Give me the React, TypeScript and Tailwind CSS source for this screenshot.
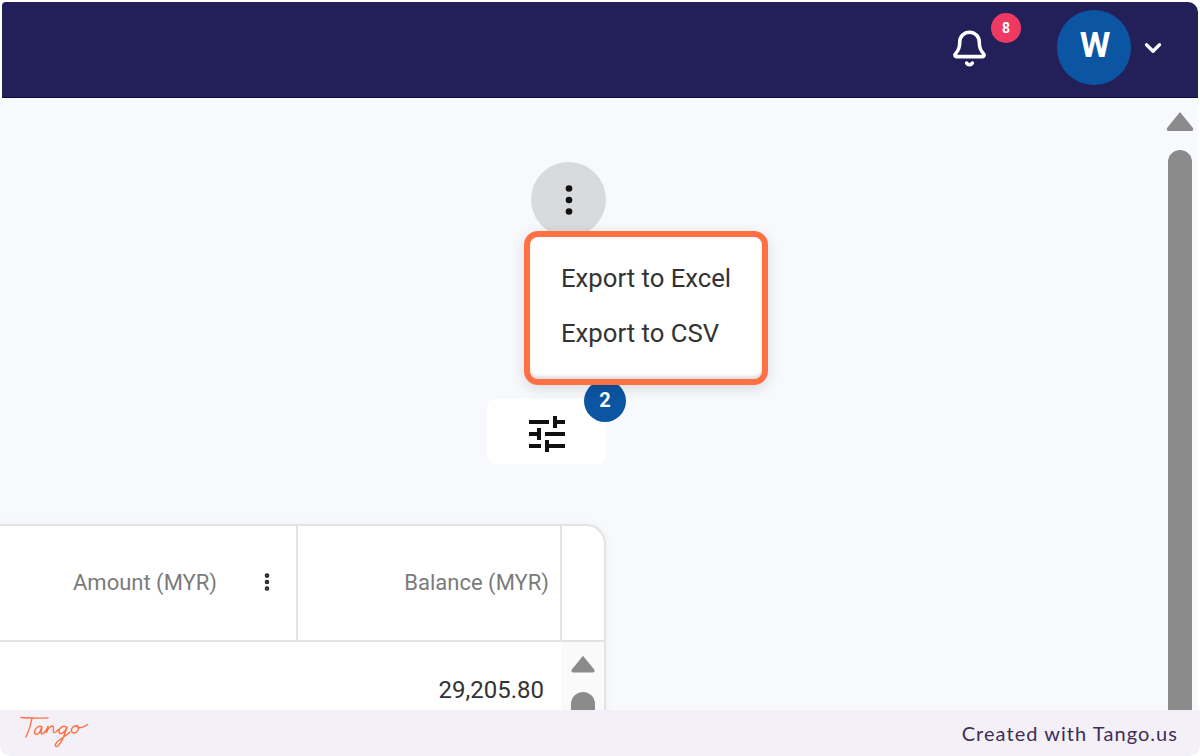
import { ChevronDown, Bell, EllipsisVertical } from "lucide-react";
import { MdTune } from "react-icons/md";

const ThreeDots = () => (
  <svg width="8" height="32" viewBox="0 0 8 32" fill="#111">
    <circle cx="4" cy="4.500" r="3.300" />
    <circle cx="4" cy="16" r="3.300" />
    <circle cx="4" cy="27.500" r="3.300" />
  </svg>
);

const TriangleUp = () => (
  <svg width="28" height="22" viewBox="0 0 28 22" fill="#8b8b8b">
    <path d="M14 1 L27 17 Q28 20 25 20 H3 Q0 20 1 17 Z" />
  </svg>
);

const TangoLogo = () => (
  <svg width="70" height="36" viewBox="0 0 70 36" fill="none" stroke="#ff7043" strokeWidth="1.400" strokeLinecap="round" strokeLinejoin="round">
    <path d="M1 2.500c8 .6 18 .8 27 .4" />
    <path d="M12 3c-1 6-3 13-6 19" />
    <path d="M22 12c-3-2-7 1-7.500 5-.4 3 3 3 5 .5l2.500-5.500-1 6c.5 2 3 .5 5-2.500l2-4-1.500 6c1-3 3.500-6.500 6-6.500 1.500 0 .5 4 1 6 .5 1.500 3 0 5-2.500" />
    <path d="M46 12c-3-2-7 1-7 4.500 0 3 3.500 2.500 6-.5l2-4c-2 7-5 15-9 19-2.500 2-4-1-1-4 4-3.500 9-6 13-10" />
    <path d="M58 11c-4-1-7 2-6.500 5 .5 3 5 2.500 6.500-.5 1-2.500 0-4.500-1.500-4.500 2 2.500 6 2 11-1.500" />
  </svg>
);

const Scrollbar = () => (
  <div className="w-[38px] flex flex-col items-center pt-[13px] pl-[2px] pr-[1px]">
    <TriangleUp />
    <div className="mt-[17px] w-[24px] flex-1 rounded-t-full bg-[#8b8b8b]" />
  </div>
);

export default function App() {
  return (
    <div
      className="relative h-[756px] w-[1200px] overflow-hidden bg-white flex flex-col"
      style={{ fontFamily: "Roboto, sans-serif" }}
    >
      {/* screenshot area */}
      <div className="flex-1 min-h-0 overflow-hidden flex flex-col pt-[2px] px-[2px]">
        <header className="h-[96px] shrink-0 rounded-tr-[10px] rounded-tl-[4px] bg-[#231f58] border-b-[1px] border-[#0b0a3a] flex items-center justify-end pb-[4px]">
          <div className="relative mr-[68px] mt-[2px]">
            <Bell className="text-white" size={39} strokeWidth={2.200} />
            <span className="absolute left-[41px] top-[-16px] w-[30px] h-[30px] rounded-full bg-[#ee3a63] text-white text-[14px] font-bold flex items-center justify-center">
              8
            </span>
          </div>
          <div className="w-[74px] h-[75px] rounded-full bg-[#0b55a3] text-white font-bold text-[35px] flex items-center justify-center pb-[3px] pl-[2px]">
            W
          </div>
          <ChevronDown className="ml-[9px] mr-[32px] text-white" size={26} strokeWidth={3} />
        </header>

        <div className="flex-1 min-h-0 flex bg-[#f8f9fd] ml-[-2px] pl-[2px]">
          <main className="relative flex-1 min-w-0">
            <div className="w-[606px] ml-[-2px] flex flex-col items-end">
              <div className="mt-[64px] w-[75px] h-[75px] rounded-full bg-[#d9dadb] flex items-center justify-center">
                <ThreeDots />
              </div>

              <div className="relative mt-[162px] w-[119px] h-[65px] rounded-[8px] bg-white flex items-center justify-center pt-[4px]">
                <MdTune size={48} color="#111" />
                <span className="absolute right-[-20px] top-[-19px] w-[42px] h-[42px] rounded-full bg-[#0b55a3] text-white font-bold text-[20px] flex items-center justify-center pb-[2px]">
                  2
                </span>
              </div>

              <section className="mt-[60px] w-[606px] rounded-tr-[20px] bg-white border-t-[2px] border-r-[2px] border-[#e3e3e3] shadow-[0_0_8px_rgba(0,0,0,0.05)]">
                <div className="h-[116px] flex border-b-[2px] border-[#e3e3e3]">
                  <div className="flex-1 flex items-center justify-end text-[22px] text-[#7b7b7b] border-r-[2px] border-[#e3e3e3] pb-[2px]">
                    <span>Amount (MYR)</span>
                    <span className="ml-[39px] mr-[18px] flex items-center">
                      <EllipsisVertical size={22} strokeWidth={3} className="text-[#222]" />
                    </span>
                  </div>
                  <div className="w-[264px] flex items-center justify-end pr-[11px] text-[22px] text-[#7b7b7b] border-r-[2px] border-[#e3e3e3] pb-[2px]">
                    Balance (MYR)
                  </div>
                  <div className="w-[42px]" />
                </div>
                <div className="flex h-[120px]">
                  <div className="flex-1 pt-[31px] pr-[17px] text-right text-[24px] text-[#333333] leading-[34px]">
                    29,205.80
                  </div>
                  <div className="w-[43px] bg-[#fafafa] flex flex-col items-center pt-[13px]">
                    <TriangleUp />
                    <div className="mt-[18px] w-[24px] h-[80px] rounded-t-full bg-[#8b8b8b]" />
                  </div>
                </div>
              </section>
            </div>

            {/* export menu */}
            <div className="absolute left-[522px] top-[133px] w-[244px] h-[154px] rounded-[14px] border-[6px] border-[#ff7043] bg-white shadow-[0_4px_14px_rgba(0,0,0,0.12),inset_0_-3px_3px_rgba(0,0,0,0.12)] pt-[14px] pl-[31px] text-[25.700px] leading-[55px] text-[#333333]">
              <div>Export to Excel</div>
              <div>Export to CSV</div>
            </div>
          </main>
          <Scrollbar />
        </div>
      </div>

      <footer className="h-[46px] shrink-0 rounded-b-[10px] bg-[#f3f1f7] flex items-center justify-between pl-[20px] pr-[22px]">
        <TangoLogo />
        <span className="text-[20px] tracking-[1.050px] text-[#3f2d56]" style={{ fontFamily: "Lato, sans-serif" }}>
          Created with Tango.us
        </span>
      </footer>
    </div>
  );
}
